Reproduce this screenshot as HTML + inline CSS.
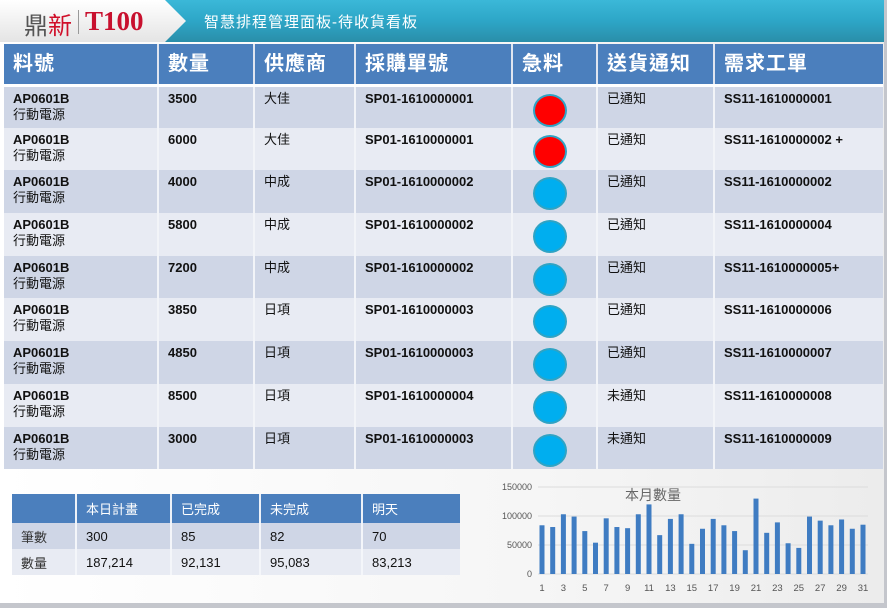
<!DOCTYPE html>
<html><head><meta charset="utf-8"><style>
*{margin:0;padding:0;box-sizing:border-box}
body{width:887px;height:608px;overflow:hidden;background:#c4c6cc;font-family:"Liberation Sans","Noto Sans CJK TC",sans-serif;position:relative}
#main{position:absolute;left:0;top:0;width:884px;height:603px;background:linear-gradient(90deg,#ffffff,#f6f6f6 60%,#ececec);}
#hdr{position:absolute;left:0;top:0;width:884px;height:42px;background:linear-gradient(#3bb8d8,#2da6c7 50%,#2a8ea9);}
#logo{position:absolute;left:0;top:0;width:186px;height:42px;background:linear-gradient(#ffffff,#e4e4e4);clip-path:polygon(0 0,165px 0,186px 21px,165px 42px,0 42px)}
.t{position:absolute;white-space:nowrap}
table{border-collapse:collapse;position:absolute}
#tb{left:4px;top:44px;width:879px}
#tb th{background:#4b7fbd;color:#fff;font-size:20px;font-weight:bold;text-align:left;padding:3px 0 0 9px;height:41px;vertical-align:top;border-left:2px solid #dfe5f0;letter-spacing:1px}
#tb tr.h{border-bottom:3px solid #fff}
#tb td{font-size:13px;font-weight:bold;height:42.7px;vertical-align:top;padding:4px 0 0 9px;border-left:2px solid #f2f4f8;color:#111;line-height:16px}
#tb td.n,#tb td span{font-weight:normal}
#tb td:first-child,#tb th:first-child{border-left:none}
#tb tr:nth-child(even) td{background:#cfd6e6}
#tb tr:nth-child(odd) td{background:#e8ebf3}
#tb td.c{padding:0;position:relative}
.dot{position:absolute;left:20px;top:7px;width:34px;height:33px;border-radius:50%;background:#00aeef;border:2px solid #2fa3c4}
.red{background:#ff0000}
#sm{left:12px;top:494px;width:448px}
#sm th{background:#4b7fbd;color:#fff;font-size:13px;font-weight:normal;text-align:left;padding:0 0 0 9px;height:29px;border-left:2px solid #eef2f8}
#sm td{font-size:13px;height:26px;padding-left:9px;border-left:2px solid #f4f6fa;color:#111}
#sm tr:nth-child(2) td{background:#cfd6e6}
#sm tr:nth-child(3) td{background:#e8ebf3}
#sm td:first-child,#sm th:first-child{border-left:none;color:#333}
</style></head><body>
<div id="main"></div>
<div id="hdr"></div>
<div id="logo"></div>
<div class="t" style="left:24px;top:6px;font-size:24px;color:#555">鼎<span style="color:#d0102a">新</span></div>
<div style="position:absolute;left:78px;top:10px;width:1px;height:24px;background:#999"></div>
<div class="t" style="left:85px;top:6px;font-size:27px;font-weight:bold;font-family:'Liberation Serif',serif;color:#c8102e">T100</div>
<div class="t" style="left:204px;top:11px;font-size:15px;color:#fff;letter-spacing:1px">智慧排程管理面板-待收貨看板</div>
<table id="tb">
<tr class="h"><th style="width:154px">料號</th><th style="width:96px">數量</th><th style="width:101px">供應商</th><th style="width:157px">採購單號</th><th style="width:85px">急料</th><th style="width:117px">送貨通知</th><th>需求工單</th></tr>
<tr><td>AP0601B<br><span>行動電源</span></td><td>3500</td><td class="n">大佳</td><td>SP01-1610000001</td><td class="c"><div class="dot red"></div></td><td class="n">已通知</td><td>SS11-1610000001</td></tr>
<tr><td>AP0601B<br><span>行動電源</span></td><td>6000</td><td class="n">大佳</td><td>SP01-1610000001</td><td class="c"><div class="dot red"></div></td><td class="n">已通知</td><td>SS11-1610000002 +</td></tr>
<tr><td>AP0601B<br><span>行動電源</span></td><td>4000</td><td class="n">中成</td><td>SP01-1610000002</td><td class="c"><div class="dot"></div></td><td class="n">已通知</td><td>SS11-1610000002</td></tr>
<tr><td>AP0601B<br><span>行動電源</span></td><td>5800</td><td class="n">中成</td><td>SP01-1610000002</td><td class="c"><div class="dot"></div></td><td class="n">已通知</td><td>SS11-1610000004</td></tr>
<tr><td>AP0601B<br><span>行動電源</span></td><td>7200</td><td class="n">中成</td><td>SP01-1610000002</td><td class="c"><div class="dot"></div></td><td class="n">已通知</td><td>SS11-1610000005+</td></tr>
<tr><td>AP0601B<br><span>行動電源</span></td><td>3850</td><td class="n">日項</td><td>SP01-1610000003</td><td class="c"><div class="dot"></div></td><td class="n">已通知</td><td>SS11-1610000006</td></tr>
<tr><td>AP0601B<br><span>行動電源</span></td><td>4850</td><td class="n">日項</td><td>SP01-1610000003</td><td class="c"><div class="dot"></div></td><td class="n">已通知</td><td>SS11-1610000007</td></tr>
<tr><td>AP0601B<br><span>行動電源</span></td><td>8500</td><td class="n">日項</td><td>SP01-1610000004</td><td class="c"><div class="dot"></div></td><td class="n">未通知</td><td>SS11-1610000008</td></tr>
<tr><td>AP0601B<br><span>行動電源</span></td><td>3000</td><td class="n">日項</td><td>SP01-1610000003</td><td class="c"><div class="dot"></div></td><td class="n">未通知</td><td>SS11-1610000009</td></tr>
</table>
<table id="sm">
<tr><th style="width:64px"></th><th style="width:95px">本日計畫</th><th style="width:89px">已完成</th><th style="width:102px">未完成</th><th>明天</th></tr>
<tr><td>筆數</td><td>300</td><td>85</td><td>82</td><td>70</td></tr>
<tr><td>數量</td><td>187,214</td><td>92,131</td><td>95,083</td><td>83,213</td></tr>
</table>
<svg style="position:absolute;left:480px;top:474px" width="404" height="128" font-family="Liberation Sans, sans-serif">
<g stroke="#dcdcdc" stroke-width="1"><line x1="58" y1="13" x2="388" y2="13"/><line x1="58" y1="42" x2="388" y2="42"/><line x1="58" y1="71" x2="388" y2="71"/><line x1="58" y1="100" x2="388" y2="100"/></g>
<g font-size="9" fill="#555" text-anchor="end"><text x="52" y="16">150000</text><text x="52" y="45">100000</text><text x="52" y="74">50000</text><text x="52" y="103">0</text></g>
<text x="145" y="26" font-size="14" fill="#666" font-family="Liberation Sans, Noto Sans CJK TC, sans-serif">本月數量</text>
<g fill="#3f7cc2" id="bars"></g>
<g font-size="9.5" fill="#555" text-anchor="middle" id="lbl"></g>
</svg>
<script>
var v=[84,81,103,99,74,54,96,81,79,103,120,67,95,103,52,78,95,84,74,41,130,71,89,53,45,99,92,84,94,78,85];
var b='',l='';
for(var i=0;i<31;i++){var x=62+i*10.7,h=v[i]*0.58;b+='<rect x="'+(x-2.5)+'" y="'+(100-h)+'" width="5" height="'+h+'"/>';if(i%2==0)l+='<text x="'+x+'" y="117">'+(i+1)+'</text>';}
document.getElementById('bars').innerHTML=b;document.getElementById('lbl').innerHTML=l;
</script>
</body></html>
